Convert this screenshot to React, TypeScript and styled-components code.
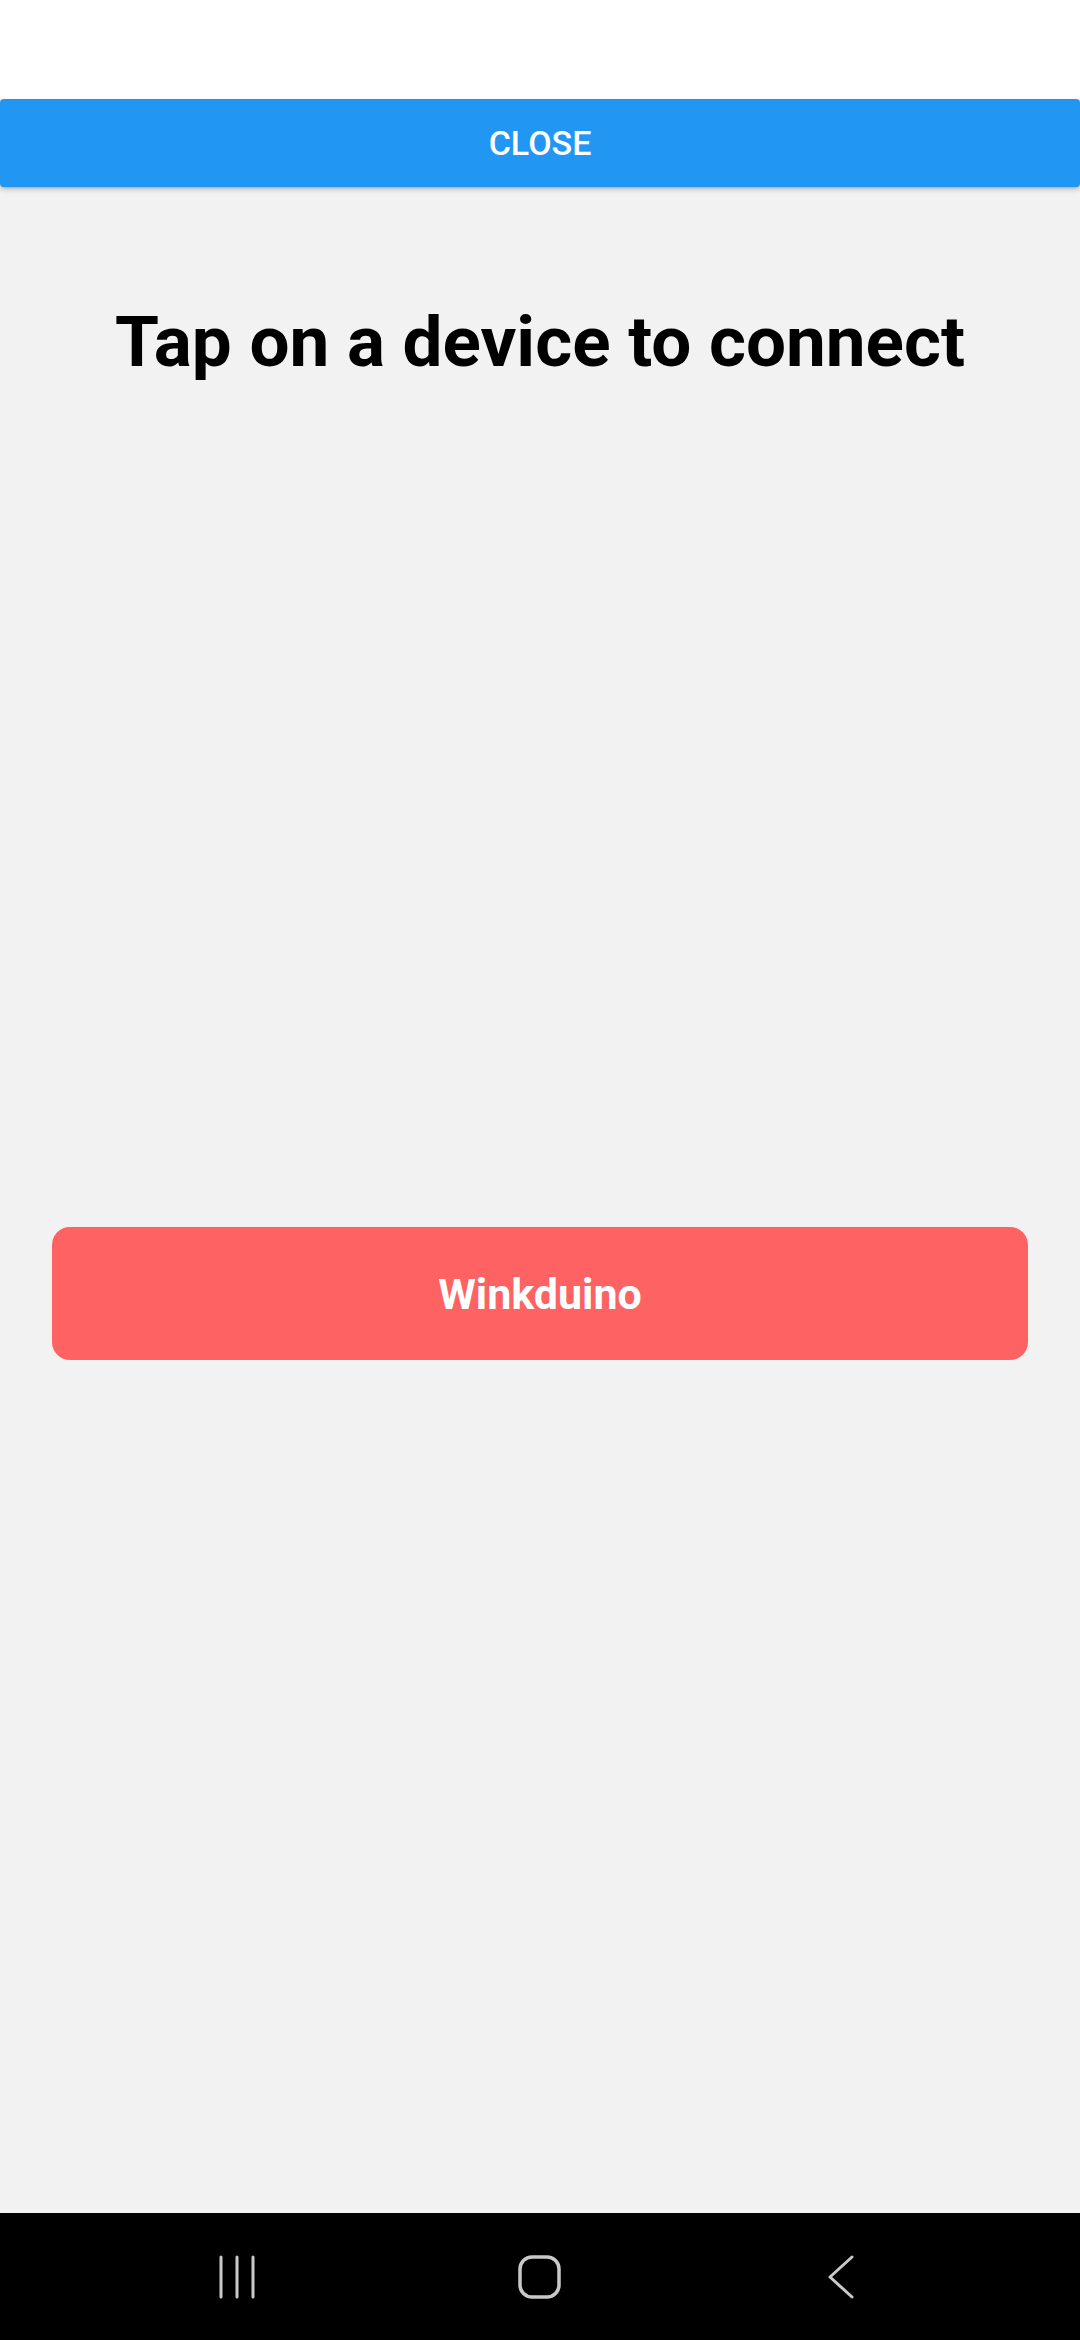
import React from "react";
import styled, { createGlobalStyle } from "styled-components";

const Global = createGlobalStyle`
  html, body { margin: 0; padding: 0; }
  body { font-family: Roboto, "Noto Sans", "Liberation Sans", sans-serif; background: #ffffff; }
  #root { min-height: 2340px; }
`;

const Screen = styled.div`
  width: 1080px;
  height: 2340px;
  display: flex;
  flex-direction: column;
  background: #f2f2f2;
  overflow: hidden;
`;

const StatusArea = styled.div`
  height: 99px;
  flex: none;
  background: #ffffff;
`;

const CloseBar = styled.button`
  flex: none;
  height: 88px;
  width: 100%;
  border: none;
  margin: 0;
  padding: 0;
  background: #2196f3;
  color: #ffffff;
  border-radius: 4px;
  box-shadow: 0 3px 5px rgba(0, 0, 0, 0.18), 0 1px 2px rgba(0, 0, 0, 0.12);
  font-family: Roboto, "Noto Sans", sans-serif;
  font-weight: 500;
  font-size: 34px;
  display: flex;
  align-items: center;
  justify-content: center;
  position: relative;
  z-index: 1;
`;

const Content = styled.main`
  flex: 1;
  display: flex;
  flex-direction: column;
  align-items: center;
`;

const Title = styled.h1`
  margin: 112px 0 0;
  font-family: Roboto, "Noto Sans", sans-serif;
  font-weight: 700;
  font-size: 71px;
  line-height: 86px;
  color: #000000;
  text-align: center;
`;

const DeviceList = styled.div`
  margin-top: 842px;
  width: 976px;
  display: flex;
  flex-direction: column;
  gap: 24px;
`;

const DeviceButton = styled.button`
  height: 133px;
  width: 100%;
  border: none;
  border-radius: 18px;
  background: #ff6262;
  color: #ffffff;
  font-family: Roboto, "Noto Sans", sans-serif;
  font-weight: 700;
  font-size: 43px;
  display: flex;
  align-items: center;
  justify-content: center;
  padding: 0;
`;

const NavBar = styled.nav`
  flex: none;
  height: 127px;
  background: #000000;
  display: flex;
  align-items: center;
  justify-content: space-between;
  padding: 0 208px 0 207px;
`;

const NavSlot = styled.div`
  width: 60px;
  height: 60px;
  display: flex;
  align-items: center;
  justify-content: center;
`;

const stroke = "#c9c9c9";

export default function App() {
  return (
    <>
      <Global />
      <Screen>
        <StatusArea />
        <CloseBar>CLOSE</CloseBar>
        <Content>
          <Title>Tap on a device to connect</Title>
          <DeviceList>
            <DeviceButton>Winkduino</DeviceButton>
          </DeviceList>
        </Content>
        <NavBar>
          <NavSlot>
            <svg width="44" height="44" viewBox="0 0 44 44">
              <line x1="6" y1="2" x2="6" y2="42" stroke={stroke} strokeWidth="3" strokeLinecap="round" />
              <line x1="22" y1="2" x2="22" y2="42" stroke={stroke} strokeWidth="3" strokeLinecap="round" />
              <line x1="38" y1="2" x2="38" y2="42" stroke={stroke} strokeWidth="3" strokeLinecap="round" />
            </svg>
          </NavSlot>
          <NavSlot>
            <svg width="46" height="46" viewBox="0 0 46 46">
              <rect x="3" y="3" width="39" height="40" rx="12" ry="12" fill="none" stroke={stroke} strokeWidth="3.5" />
            </svg>
          </NavSlot>
          <NavSlot>
            <svg width="30" height="46" viewBox="0 0 30 46">
              <polyline points="25,3 3,23 25,43" fill="none" stroke={stroke} strokeWidth="3" strokeLinecap="round" strokeLinejoin="round" />
            </svg>
          </NavSlot>
        </NavBar>
      </Screen>
    </>
  );
}
